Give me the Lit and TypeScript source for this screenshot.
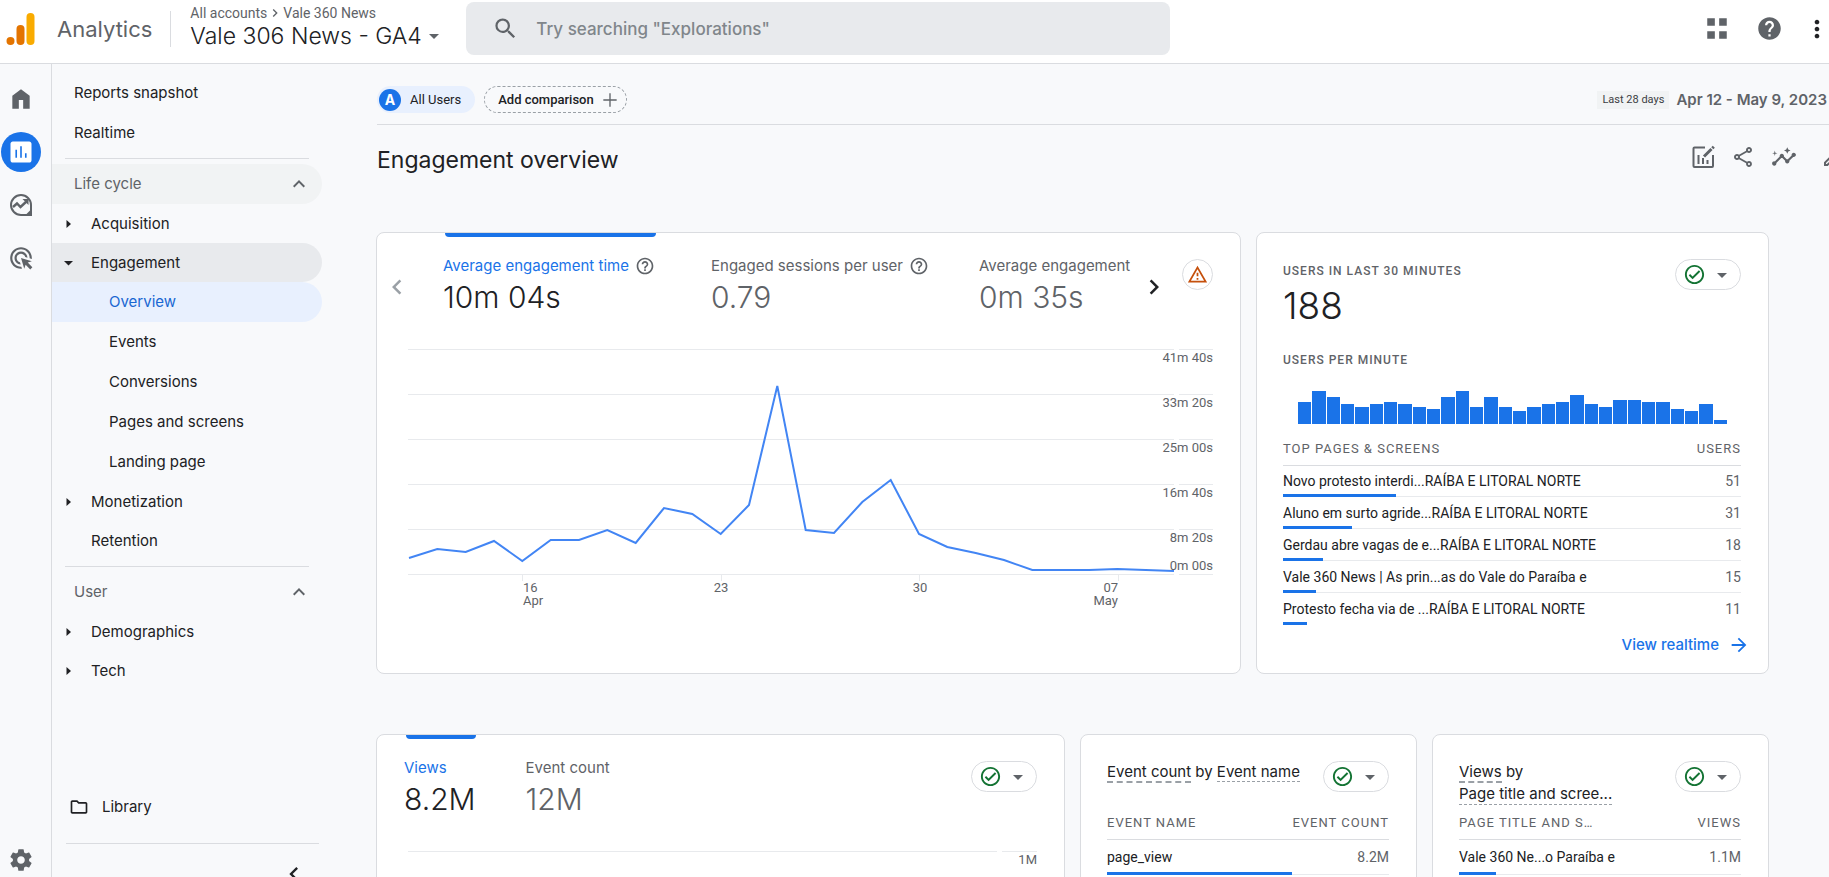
import { LitElement, html, css, svg, nothing } from "lit";
import { customElement, property, state } from "lit/decorators.js";
import { classMap } from "lit/directives/class-map.js";

const ICONS: Record<string, string> = {
  home: "M4 21V9l8-6 8 6v12h-6v-8h-4v8z",
  search:
    "M15.5 14h-.79l-.28-.27A6.471 6.471 0 0 0 16 9.5 6.5 6.5 0 1 0 9.5 16c1.61 0 3.09-.59 4.23-1.57l.27.28v.79l5 4.99L20.49 19l-4.99-5zm-6 0C7.01 14 5 11.99 5 9.5S7.01 5 9.5 5 14 7.01 14 9.5 11.99 14 9.5 14z",
  apps: "M3 2h7v7H3zM14 2h7v7h-7zM3 14h7v7H3zM14 14h7v7h-7z",
  help: "M12 2C6.48 2 2 6.48 2 12s4.48 10 10 10 10-4.48 10-10S17.52 2 12 2zm1 17h-2v-2h2v2zm2.07-7.75l-.9.92C13.45 12.9 13 13.5 13 15h-2v-.5c0-1.1.45-2.1 1.17-2.83l1.24-1.26c.37-.36.59-.86.59-1.41 0-1.1-.9-2-2-2s-2 .9-2 2H8c0-2.21 1.79-4 4-4s4 1.79 4 4c0 .88-.36 1.68-.93 2.25z",
  helpOutline:
    "M11 18h2v-2h-2v2zm1-16C6.48 2 2 6.48 2 12s4.48 10 10 10 10-4.48 10-10S17.52 2 12 2zm0 18c-4.41 0-8-3.59-8-8s3.59-8 8-8 8 3.59 8 8-3.59 8-8 8zm0-14c-2.21 0-4 1.79-4 4h2c0-1.1.9-2 2-2s2 .9 2 2c0 2-3 1.75-3 5h2c0-2.25 3-2.5 3-5 0-2.21-1.79-4-4-4z",
  more: "M12 8c1.1 0 2-.9 2-2s-.9-2-2-2-2 .9-2 2 .9 2 2 2zm0 2c-1.1 0-2 .9-2 2s.9 2 2 2 2-.9 2-2-.9-2-2-2zm0 6c-1.1 0-2 .9-2 2s.9 2 2 2 2-.9 2-2-.9-2-2-2z",
  reports:
    "M19 3H5c-1.1 0-2 .9-2 2v14c0 1.1.9 2 2 2h14c1.1 0 2-.9 2-2V5c0-1.1-.9-2-2-2zM8.600 17h-1.400v-7h1.400v7zm4.100 0h-1.400V7h1.400v10zm4.100 0h-1.400v-4h1.400v4z",
  target:
    "M11.710 17.990C8.530 17.840 6 15.220 6 12c0-3.310 2.690-6 6-6c3.220 0 5.840 2.530 5.990 5.710l-2.100-.63C15.480 9.310 13.890 8 12 8c-2.210 0-4 1.790-4 4c0 1.890 1.310 3.480 3.080 3.890L11.710 17.990zM22 12c0 .3-.01.6-.04.9l-1.970-.59C20 12.210 20 12.100 20 12c0-4.420-3.580-8-8-8s-8 3.580-8 8s3.580 8 8 8c.1 0 .21 0 .31-.01l.59 1.970C12.600 21.990 12.300 22 12 22C6.480 22 2 17.520 2 12C2 6.480 6.480 2 12 2S22 6.480 22 12zM18.230 16.260L22 15l-10-3l3 10l1.260-3.770l4.270 4.270l1.980-1.980L18.230 16.260z",
  gear: "M19.430 12.980c.04-.32.07-.64.07-.98s-.03-.66-.07-.98l2.110-1.650c.19-.15.24-.42.12-.64l-2-3.460c-.12-.22-.39-.3-.61-.22l-2.490 1c-.52-.4-1.080-.73-1.690-.98l-.38-2.650C14.460 2.180 14.250 2 14 2h-4c-.25 0-.46.18-.49.42l-.38 2.650c-.61.25-1.170.59-1.690.98l-2.490-1c-.23-.09-.49 0-.61.22l-2 3.460c-.13.22-.07.49.12.64l2.110 1.650c-.04.32-.07.65-.07.98s.03.66.07.98l-2.110 1.650c-.19.15-.24.42-.12.64l2 3.460c.12.22.39.3.61.22l2.490-1c.52.4 1.080.73 1.690.98l.38 2.650c.03.24.24.42.49.42h4c.25 0 .46-.18.49-.42l.38-2.650c.61-.25 1.170-.59 1.690-.98l2.490 1c.23.09.49 0 .61-.22l2-3.460c.12-.22.07-.49-.12-.64l-2.110-1.650zM12 15.500c-1.930 0-3.500-1.570-3.500-3.500s1.570-3.500 3.500-3.500 3.500 1.570 3.500 3.500-1.570 3.500-3.500 3.500z",
  folder: "M9.170 6l2 2H20v10H4V6h5.170M10 4H4c-1.100 0-1.990.9-1.990 2L2 18c0 1.100.9 2 2 2h16c1.100 0 2-.9 2-2V8c0-1.100-.9-2-2-2h-8l-2-2z",
  share:
    "M18 16.080c-.76 0-1.440.3-1.960.77L8.910 12.700c.05-.23.09-.46.09-.7s-.04-.47-.09-.7l7.050-4.110c.54.5 1.250.81 2.040.81 1.660 0 3-1.340 3-3s-1.340-3-3-3-3 1.340-3 3c0 .24.04.47.09.7L8.040 9.810C7.500 9.310 6.790 9 6 9c-1.660 0-3 1.340-3 3s1.340 3 3 3c.79 0 1.500-.31 2.040-.81l7.120 4.160c-.05.21-.08.43-.08.65 0 1.610 1.310 2.920 2.920 2.920s2.920-1.310 2.920-2.920-1.310-2.920-2.920-2.920zM18 4c.55 0 1 .45 1 1s-.45 1-1 1-1-.45-1-1 .45-1 1-1zM6 13c-.55 0-1-.45-1-1s.45-1 1-1 1 .45 1 1-.45 1-1 1zm12 7.020c-.55 0-1-.45-1-1s.45-1 1-1 1 .45 1 1-.45 1-1 1z",
  insights:
    "M21 8c-1.450 0-2.260 1.440-1.930 2.510l-3.550 3.560c-.3-.09-.74-.09-1.040 0l-2.550-2.550C12.270 10.450 11.460 9 10 9c-1.450 0-2.270 1.440-1.930 2.520l-4.560 4.550C2.440 15.740 1 16.550 1 18c0 1.100.9 2 2 2c1.450 0 2.260-1.440 1.930-2.510l4.550-4.560c.3.09.74.09 1.040 0l2.550 2.550C12.730 16.550 13.540 18 15 18c1.450 0 2.270-1.440 1.930-2.520l3.560-3.550C21.560 12.260 23 11.450 23 10C23 8.900 22.100 8 21 8zM15 9l.94-2.070L18 6l-2.060-.93L15 3l-.92 2.070L12 6l2.080.93zM3.500 11L4 9l2-.5L4 8L3.500 6L3 8L1 8.500L3 9z",
  pencil:
    "M14.060 9.020l.92.92L5.920 19H5v-.92l9.060-9.060M17.660 3c-.25 0-.51.1-.7.29l-1.830 1.830 3.750 3.750 1.830-1.830c.39-.39.39-1.020 0-1.410l-2.340-2.340c-.2-.2-.45-.29-.71-.29zm-3.600 3.190L3 17.250V21h3.750L17.810 9.940l-3.750-3.750z",
  warning: "M1 21h22L12 2 1 21zM4.470 19L12 5.990 19.530 19H4.470zM11 16h2v2h-2zM11 10h2v4h-2z",
  checkCircle:
    "M12 2C6.480 2 2 6.480 2 12s4.480 10 10 10 10-4.480 10-10S17.520 2 12 2zm0 18c-4.410 0-8-3.590-8-8s3.590-8 8-8 8 3.590 8 8-3.590 8-8 8zm4.590-12.420L10 14.170l-2.590-2.580L6 13l4 4 8-8z",
  caret: "M7 10l5 5 5-5z",
  arrowRight: "M12 4l-1.410 1.410L16.170 11H4v2h12.170l-5.580 5.590L12 20l8-8z",
  chevronUp: "M12 8l-6 6 1.410 1.410L12 10.830l4.590 4.580L18 14z",
  chevronLeft: "M15.410 7.410L14 6l-6 6 6 6 1.410-1.410L10.830 12z",
  chevronRight: "M10 6L8.590 7.410 13.170 12l-4.580 4.590L10 18l6-6z",
  plus: "M20 12.800h-7.200V20h-1.600v-7.200H4v-1.600h7.200V4h1.600v7.200H20z",
};

const icon = (name: string, size = 24) => html`
  <svg width=${size} height=${size} viewBox="0 0 24 24" fill="currentColor" fill-rule="evenodd" aria-hidden="true">
    <path d=${ICONS[name]}></path>
  </svg>
`;

const exploreIcon = html`
  <svg width="26" height="26" viewBox="0 0 26 26" fill="none" stroke="currentColor" stroke-width="2" aria-hidden="true">
    <path d="M13 23a10 10 0 1 1 10-10v10z"></path>
    <path d="M5 15l4-3.500 3.500 3.500 6.500-6" stroke-width="2.400"></path>
    <path d="M14.500 7h6v6z" fill="currentColor" stroke="none"></path>
    <path d="M17 23.500l6.500-6.500v6.500z" fill="currentColor" stroke="none"></path>
  </svg>
`;

const customizeIcon = html`
  <svg width="24" height="24" viewBox="0 0 24 24" fill="none" stroke="currentColor" stroke-width="2" aria-hidden="true">
    <path d="M14 2.500H3.500a1 1 0 0 0-1 1V21a1 1 0 0 0 1 1H21a1 1 0 0 0 1-1V10"></path>
    <path d="M7.500 10v9M12 13v6M16.500 15v4"></path>
    <path d="M13 11.500l7.500-7.500M21.300 3.200l1.500-1.500" stroke-width="3"></path>
  </svg>
`;

const baseStyles = css`
  *,
  *::before,
  *::after {
    box-sizing: border-box;
  }
  button {
    font: inherit;
    color: inherit;
    background: none;
    border: 0;
    padding: 0;
    margin: 0;
    text-align: left;
    cursor: pointer;
  }
  a {
    color: inherit;
    text-decoration: none;
  }
  svg {
    display: block;
    flex: none;
  }
  h1,
  h2,
  p,
  ul {
    margin: 0;
    padding: 0;
    font-weight: 400;
    list-style: none;
  }
`;

/* ---------- top bar ---------- */

@customElement("ga-header")
export class GaHeader extends LitElement {
  static styles = [
    baseStyles,
    css`
      :host {
        display: flex;
        height: 64px;
        border-bottom: 1px solid #dadce0;
        background: #fff;
        color: #5f6368;
        overflow: hidden;
      }
      .brand {
        display: flex;
        align-items: center;
        gap: 20px;
        height: 57px;
        padding-left: 6px;
        font-size: 22px;
        line-height: 32px;
      }
      .rule {
        width: 1px;
        height: 36px;
        margin: 11px 19px 0 18px;
        background: #dadce0;
      }
      .account {
        align-self: flex-start;
        width: 276px;
        padding-top: 5px;
        white-space: nowrap;
      }
      .path {
        display: flex;
        align-items: center;
        font: 14px/16px Roboto, sans-serif;
      }
      .path svg {
        height: 16px;
        margin: 0 -1px;
      }
      .property {
        display: flex;
        align-items: center;
        font-size: 23px;
        font-weight: 300;
        line-height: 30px;
        color: #202124;
      }
      .property svg {
        color: #5f6368;
      }
      .search {
        display: flex;
        align-items: center;
        flex: 0 1 704px;
        height: 53px;
        margin-top: 2px;
        padding-left: 26px;
        gap: 17px;
        border-radius: 8px;
        background: #e8eaed;
      }
      .search input {
        flex: 1;
        min-width: 0;
        border: 0;
        outline: 0;
        padding: 0;
        background: none;
        font: 500 17px/24px Inter, sans-serif;
        color: #202124;
      }
      .search input::placeholder {
        color: #80868b;
        opacity: 1;
      }
      .actions {
        display: flex;
        align-items: center;
        gap: 26px;
        height: 57px;
        margin-left: auto;
        padding-right: 4px;
      }
      .actions .more {
        display: flex;
        justify-content: center;
        width: 16px;
        color: #202124;
      }
    `,
  ];

  render() {
    return html`
      <div class="brand">
        <svg width="31" height="34" viewBox="0 0 31 34" aria-hidden="true">
          <rect x="20.500" y="1" width="8" height="32" rx="4" fill="#f9ab00"></rect>
          <rect x="10.500" y="13" width="8" height="20" rx="4" fill="#e37400"></rect>
          <circle cx="4.500" cy="29" r="4" fill="#e37400"></circle>
        </svg>
        <span>Analytics</span>
      </div>
      <div class="rule"></div>
      <button class="account">
        <span class="path">All accounts ${icon("chevronRight", 18)} Vale 360 News</span>
        <span class="property">Vale 306 News - GA4 ${icon("caret", 24)}</span>
      </button>
      <label class="search">
        ${icon("search", 27)}
        <input type="search" aria-label="Search" placeholder='Try searching "Explorations"' />
      </label>
      <div class="actions">
        <button aria-label="Apps">${icon("apps", 26)}</button>
        <button aria-label="Help">${icon("help", 27)}</button>
        <button class="more" aria-label="More">${icon("more", 28)}</button>
      </div>
    `;
  }
}

/* ---------- icon rail ---------- */

@customElement("ga-rail")
export class GaRail extends LitElement {
  static styles = [
    baseStyles,
    css`
      :host {
        display: flex;
        flex-direction: column;
        gap: 13px;
        width: 52px;
        padding: 15px 10px 4px 1px;
        border-right: 1px solid #dadce0;
        color: #5f6368;
      }
      .item {
        display: flex;
        align-items: center;
        justify-content: center;
        width: 40px;
        height: 40px;
        border-radius: 50%;
      }
      .active {
        background: #1a73e8;
        color: #fff;
      }
      .bottom {
        margin-top: auto;
        height: 26px;
      }
    `,
  ];

  render() {
    return html`
      <a class="item" href="#home" aria-label="Home">${icon("home", 26)}</a>
      <a class="item active" href="#reports" aria-label="Reports">${icon("reports", 28)}</a>
      <a class="item" href="#explore" aria-label="Explore">${exploreIcon}</a>
      <a class="item" href="#advertising" aria-label="Advertising">${icon("target", 26)}</a>
      <a class="item bottom" href="#admin" aria-label="Admin">${icon("gear", 26)}</a>
    `;
  }
}

/* ---------- report navigation ---------- */

interface NavItem {
  label: string;
  kind: "group" | "leaf" | "child";
  open?: boolean;
  selected?: boolean;
}

const LIFE_CYCLE: NavItem[] = [
  { label: "Acquisition", kind: "group" },
  { label: "Engagement", kind: "group", open: true },
  { label: "Overview", kind: "child", selected: true },
  { label: "Events", kind: "child" },
  { label: "Conversions", kind: "child" },
  { label: "Pages and screens", kind: "child" },
  { label: "Landing page", kind: "child" },
  { label: "Monetization", kind: "group" },
  { label: "Retention", kind: "leaf" },
];

const USER: NavItem[] = [
  { label: "Demographics", kind: "group" },
  { label: "Tech", kind: "group" },
];

@customElement("ga-nav")
export class GaNav extends LitElement {
  static styles = [
    baseStyles,
    css`
      :host {
        display: flex;
        flex-direction: column;
        width: 324px;
        padding-top: 9px;
        font-size: 15px;
        line-height: 20px;
        color: #202124;
        overflow: hidden;
      }
      .row {
        display: flex;
        align-items: center;
        width: 270px;
        height: 40px;
        border-radius: 0 20px 20px 0;
      }
      .top {
        padding-left: 22px;
      }
      .section {
        justify-content: space-between;
        padding: 0 11px 0 22px;
        color: #5f6368;
      }
      .hovered {
        background: #f1f3f4;
      }
      .group,
      .leaf {
        height: 39px;
      }
      .group {
        gap: 11px;
        padding-left: 4px;
      }
      .leaf {
        padding-left: 39px;
      }
      .open {
        background: #e8eaed;
      }
      .child {
        padding-left: 57px;
      }
      .selected {
        background: #e8f0fe;
        color: #1967d2;
      }
      .rule {
        width: 244px;
        height: 1px;
        margin: 5px 0 5px 13px;
        background: #dadce0;
      }
      .reports {
        padding-bottom: 1px;
      }
      .library {
        gap: 13px;
        margin-top: auto;
        padding-left: 17px;
      }
      .footer {
        display: flex;
        justify-content: flex-end;
        width: 253px;
        margin: 16px 0 -11px 14px;
        padding: 16px 11px 0 0;
        border-top: 1px solid #dadce0;
      }
    `,
  ];

  private item(it: NavItem) {
    const cls = {
      row: true,
      [it.kind]: true,
      open: !!it.open,
      selected: !!it.selected,
    };
    const arrow = html`
      <svg width="24" height="24" viewBox="0 0 24 24" fill="currentColor" aria-hidden="true">
        <path d=${it.open ? "M8 10h9l-4.500 4.500z" : "M10.500 8v8l4.500-4z"}></path>
      </svg>
    `;
    return html`
      <li>
        <a class=${classMap(cls)} href="#report">${it.kind === "group" ? arrow : nothing}${it.label}</a>
      </li>
    `;
  }

  render() {
    return html`
      <a class="row top" href="#snapshot">Reports snapshot</a>
      <a class="row top" href="#realtime">Realtime</a>
      <div class="rule"></div>
      <button class="row section hovered">Life cycle ${icon("chevronUp", 24)}</button>
      <ul class="reports">
        ${LIFE_CYCLE.map((it) => this.item(it))}
      </ul>
      <div class="rule"></div>
      <button class="row section">User ${icon("chevronUp", 24)}</button>
      <ul class="reports">
        ${USER.map((it) => this.item(it))}
      </ul>
      <a class="row library" href="#library">${icon("folder", 20)}Library</a>
      <div class="footer"><button aria-label="Collapse">${icon("chevronLeft", 28)}</button></div>
    `;
  }
}

/* ---------- shared card parts ---------- */

@customElement("ga-quality")
export class GaQuality extends LitElement {
  static styles = [
    baseStyles,
    css`
      :host {
        display: block;
        flex: none;
      }
      .pill {
        display: flex;
        align-items: center;
        justify-content: space-between;
        width: 66px;
        height: 31px;
        padding: 0 6px 0 7px;
        border: 1px solid #dadce0;
        border-radius: 16px;
        color: #5f6368;
      }
      .pill svg:first-child {
        color: #137333;
      }
    `,
  ];

  render() {
    return html`
      <button class="pill" aria-label="Data quality">${icon("checkCircle", 23)}${icon("caret", 24)}</button>
    `;
  }
}

interface Row {
  name: string;
  value: string;
  share: number;
}

@customElement("ga-table")
export class GaTable extends LitElement {
  @property() nameLabel = "";
  @property() valueLabel = "";
  @property({ attribute: false }) rows: Row[] = [];
  @property({ type: Boolean, reflect: true }) roomy = false;

  static styles = [
    baseStyles,
    css`
      :host {
        display: block;
      }
      table {
        width: 100%;
        border-spacing: 0;
        font: 14px/20px Roboto, sans-serif;
        color: #3c4043;
      }
      th {
        height: 34px;
        padding: 0;
        border-bottom: 1px solid #dadce0;
        font-size: 13px;
        font-weight: 400;
        letter-spacing: 1px;
        text-align: left;
        text-transform: uppercase;
        white-space: nowrap;
        color: #5f6368;
      }
      th:last-child,
      td:last-child {
        text-align: right;
      }
      tbody tr {
        position: relative;
      }
      td {
        height: 32px;
        padding: 0;
        border-bottom: 1px solid #e8eaed;
        color: #202124;
        white-space: nowrap;
      }
      tr:first-child td {
        height: 31px;
      }
      :host([roomy]) td {
        height: 35px;
      }
      tr:last-child td {
        border-bottom-color: transparent;
      }
      :host([roomy]) tr:last-child td {
        border-bottom-color: #e8eaed;
      }
      .bar {
        position: absolute;
        left: 0;
        bottom: 0;
        height: 3px;
        background: #1a73e8;
      }
      td:last-child {
        color: #5f6368;
      }
    `,
  ];

  render() {
    return html`
      <table>
        <thead>
          <tr>
            <th scope="col">${this.nameLabel}</th>
            <th scope="col">${this.valueLabel}</th>
          </tr>
        </thead>
        <tbody>
          ${this.rows.map(
            (r) => html`
              <tr>
                <td>${r.name}<span class="bar" style="width:${r.share}%"></span></td>
                <td>${r.value}</td>
              </tr>
            `,
          )}
        </tbody>
      </table>
    `;
  }
}

const cardStyles = css`
  :host {
    display: block;
    min-width: 0;
    border: 1px solid #dadce0;
    border-radius: 8px;
    background: #fff;
    color: #5f6368;
    overflow: hidden;
  }
  .tab {
    position: relative;
    flex: none;
    padding-top: 21px;
    white-space: nowrap;
  }
  .tab .label {
    display: flex;
    align-items: center;
    gap: 6px;
    font-size: 15px;
    line-height: 24px;
  }
  .tab .value {
    display: block;
    font-size: 30px;
    font-weight: 300;
    line-height: 38px;
  }
  .tab.on .label {
    color: #1a73e8;
  }
  .tab.on .label svg {
    color: #5f6368;
  }
  .tab.on .value {
    color: #202124;
  }
  .tab.on::before {
    content: "";
    position: absolute;
    top: 0;
    left: 2px;
    right: 0;
    height: 4px;
    border-radius: 0 0 4px 4px;
    background: #1a73e8;
  }
  .chart {
    width: 100%;
    height: auto;
    font: 13px Roboto, sans-serif;
    fill: #5f6368;
  }
  .grid {
    stroke: #e8eaed;
  }
  .line {
    fill: none;
    stroke: #4285f4;
    stroke-width: 2;
  }
`;

/* ---------- engagement trend ---------- */

const TREND = [
  218, 209, 212, 201, 221, 200, 200, 190, 203, 168, 174, 194, 165, 46, 190, 193, 162, 140, 194, 207, 213, 220, 230,
  230, 230, 229, 230, 231,
];
const SCALE: [string, number][] = [
  ["41m 40s", 22],
  ["33m 20s", 67],
  ["25m 00s", 112],
  ["16m 40s", 157],
  ["8m 20s", 202],
  ["0m 00s", 230],
];

@customElement("ga-trend-card")
export class GaTrendCard extends LitElement {
  @state() private active = 0;

  static styles = [
    baseStyles,
    cardStyles,
    css`
      .head {
        display: flex;
        padding: 0 27px 0 5px;
      }
      .arrow {
        height: 30px;
        margin-top: 39px;
        color: #202124;
      }
      .prev {
        color: #9aa0a6;
      }
      .tabs {
        display: flex;
        flex: 1;
        gap: 55px;
        min-width: 0;
        margin: 0 6px 0 31px;
        overflow: hidden;
      }
      .tab {
        width: 213px;
      }
      .alert {
        display: flex;
        align-items: center;
        justify-content: center;
        width: 31px;
        height: 31px;
        margin: 26px 0 0 13px;
        border: 1px solid #dadce0;
        border-radius: 50%;
        color: #c5500c;
      }
      .body {
        padding: 24px 27px 0 31px;
      }
    `,
  ];

  private tab(i: number, label: string, value: string, help = true) {
    return html`
      <button class=${classMap({ tab: true, on: this.active === i })} @click=${() => (this.active = i)}>
        <span class="label">${label} ${help ? icon("helpOutline", 20) : nothing}</span>
        <span class="value">${value}</span>
      </button>
    `;
  }

  render() {
    const step = 765 / (TREND.length - 1);
    const points = TREND.map((y, i) => `${(1 + i * step).toFixed(1)},${y}`).join(" ");
    return html`
      <div class="head">
        <button class="arrow prev" aria-label="Previous">${icon("chevronLeft", 30)}</button>
        <div class="tabs">
          ${this.tab(0, "Average engagement time", "10m 04s")}
          ${this.tab(1, "Engaged sessions per user", "0.79")}
          ${this.tab(2, "Average engagement", "0m 35s", false)}
        </div>
        <button class="arrow" aria-label="Next">${icon("chevronRight", 30)}</button>
        <button class="alert" aria-label="Data warning">${icon("warning", 21)}</button>
      </div>
      <div class="body">
        <svg class="chart" viewBox="0 0 805 270" role="img" aria-label="Average engagement time by day">
          ${[9, 54, 99, 144, 189, 234].map((y) => svg`<path class="grid" d="M0 ${y + 0.5}H766M771 ${y + 0.5}H805"></path>`)}
          ${[115, 314, 512, 711].map((x) => svg`<path class="grid" d="M${x - 0.5} 235v6"></path>`)}
          <polyline class="line" points=${points}></polyline>
          ${SCALE.map(([t, y]) => svg`<text x="805" y=${y} text-anchor="end">${t}</text>`)}
          <text x="115" y="252">16</text>
          <text x="115" y="265">Apr</text>
          <text x="313" y="252" text-anchor="middle">23</text>
          <text x="512" y="252" text-anchor="middle">30</text>
          <text x="710" y="252" text-anchor="end">07</text>
          <text x="710" y="265" text-anchor="end">May</text>
        </svg>
      </div>
    `;
  }
}

/* ---------- realtime ---------- */

const PER_MINUTE = [
  22, 33, 27, 20, 17, 20, 22, 20, 17, 15, 27, 33, 17, 27, 17, 13, 17, 20, 22, 29, 20, 17, 24, 24, 22, 22, 15, 13, 20, 4,
];
const TOP_PAGES: Row[] = [
  { name: "Novo protesto interdi...RAÍBA E LITORAL NORTE", value: "51", share: 24.7 },
  { name: "Aluno em surto agride...RAÍBA E LITORAL NORTE", value: "31", share: 15 },
  { name: "Gerdau abre vagas de e...RAÍBA E LITORAL NORTE", value: "18", share: 8.7 },
  { name: "Vale 360 News | As prin...as do Vale do Paraíba e", value: "15", share: 7.2 },
  { name: "Protesto fecha via de ...RAÍBA E LITORAL NORTE", value: "11", share: 5.3 },
];

@customElement("ga-realtime-card")
export class GaRealtimeCard extends LitElement {
  static styles = [
    baseStyles,
    cardStyles,
    css`
      :host {
        padding: 26px 27px 16px 26px;
      }
      .head {
        display: flex;
        justify-content: space-between;
      }
      .caption {
        font: 500 12px/24px Roboto, sans-serif;
        letter-spacing: 1px;
      }
      .total {
        font-size: 37px;
        font-weight: 300;
        line-height: 46px;
        color: #202124;
      }
      .minutes {
        margin-top: 19px;
      }
      .bars {
        display: flex;
        align-items: flex-end;
        gap: 1px;
        height: 33px;
        margin: 19px 14px 8px 15px;
      }
      .bars span {
        flex: 1;
        background: #1a73e8;
      }
      .more {
        display: flex;
        align-items: center;
        justify-content: flex-end;
        gap: 9px;
        margin: 8px -9px 0 0;
        font-size: 15px;
        font-weight: 500;
        line-height: 24px;
        color: #1a73e8;
      }
    `,
  ];

  render() {
    return html`
      <div class="head">
        <div>
          <h2 class="caption">USERS IN LAST 30 MINUTES</h2>
          <p class="total">188</p>
        </div>
        <ga-quality></ga-quality>
      </div>
      <p class="caption minutes">USERS PER MINUTE</p>
      <div class="bars" role="img" aria-label="Users per minute">
        ${PER_MINUTE.map((v) => html`<span style="height:${v}px"></span>`)}
      </div>
      <ga-table nameLabel="Top pages & screens" valueLabel="Users" .rows=${TOP_PAGES}></ga-table>
      <a class="more" href="#realtime">View realtime ${icon("arrowRight", 22)}</a>
    `;
  }
}

/* ---------- views / event count ---------- */

@customElement("ga-views-card")
export class GaViewsCard extends LitElement {
  static styles = [
    baseStyles,
    cardStyles,
    css`
      .head {
        display: flex;
        padding: 0 27px;
      }
      .tabs {
        display: flex;
        gap: 50px;
        flex: 1;
      }
      .head ga-quality {
        margin-top: 26px;
      }
      .body {
        padding: 24px 27px 0 31px;
      }
    `,
  ];

  render() {
    return html`
      <div class="head">
        <div class="tabs">
          <button class="tab on"><span class="label">Views</span><span class="value">8.2M</span></button>
          <button class="tab"><span class="label">Event count</span><span class="value">12M</span></button>
        </div>
        <ga-quality></ga-quality>
      </div>
      <div class="body">
        <svg class="chart" viewBox="0 0 629 200" role="img" aria-label="Views by day">
          <path class="grid" d="M0 9.500H589M594 9.500H629"></path>
          <text x="629" y="22" text-anchor="end">1M</text>
          <polyline class="line" points="0,90 53,60 87,45 109,37 131,45 188,56 214,44 241,38 268,60 400,90 589,110"></polyline>
        </svg>
      </div>
    `;
  }
}

/* ---------- dimension breakdown ---------- */

@customElement("ga-breakdown-card")
export class GaBreakdownCard extends LitElement {
  @property() metric = "";
  @property() dimension = "";
  @property() nameLabel = "";
  @property() valueLabel = "";
  @property({ type: Boolean }) stacked = false;
  @property({ attribute: false }) rows: Row[] = [];

  static styles = [
    baseStyles,
    cardStyles,
    css`
      :host {
        padding: 26px 27px 0 26px;
      }
      .head {
        display: flex;
        justify-content: space-between;
        min-height: 45px;
      }
      .title {
        font-size: 15px;
        line-height: 22px;
        white-space: nowrap;
        color: #202124;
      }
      .metric {
        border-bottom: 2px dashed #9aa0a6;
      }
      .dimension {
        border-bottom: 1px dashed #9aa0a6;
      }
      .stacked .dimension {
        display: table;
        line-height: 21px;
      }
    `,
  ];

  render() {
    return html`
      <div class="head">
        <h2 class=${classMap({ title: true, stacked: this.stacked })}>
          <span class="metric">${this.metric}</span> by <span class="dimension">${this.dimension}</span>
        </h2>
        <ga-quality></ga-quality>
      </div>
      <ga-table roomy .nameLabel=${this.nameLabel} .valueLabel=${this.valueLabel} .rows=${this.rows}></ga-table>
    `;
  }
}

/* ---------- page ---------- */

@customElement("app-root")
export class AppRoot extends LitElement {
  static styles = [
    baseStyles,
    css`
      :host {
        display: flex;
        flex-direction: column;
        height: 100vh;
        overflow: hidden;
        background: #f8f9fb;
        font-family: Inter, sans-serif;
      }
      .shell {
        display: flex;
        flex: 1;
        min-height: 0;
      }
      ga-rail,
      ga-nav {
        flex: none;
      }
      main {
        flex: 1;
        min-width: 0;
        overflow: hidden;
      }
      .compare {
        display: flex;
        align-items: center;
        gap: 9px;
        margin-left: 1px;
        padding: 22px 2px 11px 0;
        border-bottom: 1px solid #dadce0;
        font: 13px/18px Roboto, sans-serif;
        color: #202124;
      }
      .chip {
        display: flex;
        align-items: center;
        height: 27px;
        border-radius: 14px;
        font-size: 13px;
      }
      .all {
        gap: 9px;
        padding: 0 14px 0 2px;
        background: #e8f0fe;
      }
      .badge {
        width: 22px;
        height: 22px;
        border-radius: 50%;
        background: #1a73e8;
        color: #fff;
        font: 700 14px/22px Inter, sans-serif;
        text-align: center;
      }
      .add {
        gap: 6px;
        padding: 0 6px 0 13px;
        border: 1px dashed #9aa0a6;
        font-weight: 500;
      }
      .add svg {
        color: #5f6368;
      }
      .range {
        display: flex;
        align-items: center;
        gap: 7px;
        margin-left: auto;
        color: #5f6368;
        font: 600 15px/20px Inter, sans-serif;
        white-space: nowrap;
      }
      .preset {
        padding: 0 5px;
        background: #f1f3f4;
        font: 11px/18px Roboto, sans-serif;
        color: #3c4043;
      }
      .titlebar {
        display: flex;
        align-items: center;
        justify-content: space-between;
        height: 63px;
        padding-left: 1px;
      }
      h1 {
        padding-top: 6px;
        font-size: 23px;
        line-height: 32px;
        color: #202124;
      }
      .tools {
        display: flex;
        gap: 16px;
        margin-right: -16px;
        color: #5f6368;
      }
      .tools button:last-child {
        margin-left: 8px;
      }
      .cards {
        display: grid;
        gap: 15px;
        margin: 44px 60px 0 0;
      }
      .first {
        grid-template-columns: 865fr 513fr;
      }
      .second {
        grid-template-columns: 689fr 337fr 337fr;
        margin-top: 60px;
      }
    `,
  ];

  render() {
    return html`
      <ga-header></ga-header>
      <div class="shell">
        <ga-rail></ga-rail>
        <ga-nav></ga-nav>
        <main>
          <div class="compare">
            <button class="chip all"><span class="badge">A</span>All Users</button>
            <button class="chip add">Add comparison ${icon("plus", 20)}</button>
            <button class="range"><span class="preset">Last 28 days</span>Apr 12 - May 9, 2023</button>
          </div>
          <div class="titlebar">
            <h1>Engagement overview</h1>
            <div class="tools">
              <button aria-label="Customize">${customizeIcon}</button>
              <button aria-label="Share">${icon("share", 24)}</button>
              <button aria-label="Insights">${icon("insights", 26)}</button>
              <button aria-label="Edit">${icon("pencil", 24)}</button>
            </div>
          </div>
          <div class="cards first">
            <ga-trend-card></ga-trend-card>
            <ga-realtime-card></ga-realtime-card>
          </div>
          <div class="cards second">
            <ga-views-card></ga-views-card>
            <ga-breakdown-card
              metric="Event count"
              dimension="Event name"
              nameLabel="Event name"
              valueLabel="Event count"
              .rows=${[{ name: "page_view", value: "8.2M", share: 65.5 }]}
            ></ga-breakdown-card>
            <ga-breakdown-card
              stacked
              metric="Views"
              dimension="Page title and scree..."
              nameLabel="Page title and s…"
              valueLabel="Views"
              .rows=${[{ name: "Vale 360 Ne...o Paraíba e", value: "1.1M", share: 13 }]}
            ></ga-breakdown-card>
          </div>
        </main>
      </div>
    `;
  }
}
